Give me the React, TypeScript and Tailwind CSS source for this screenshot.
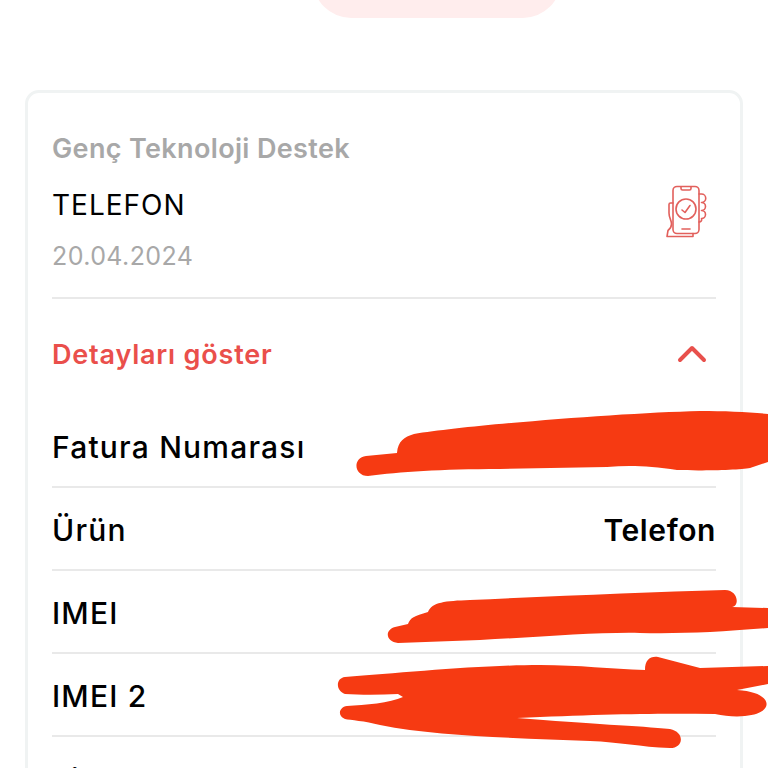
import React from 'react';

const rows = [
  { label: 'Fatura Numarası', value: '' },
  { label: 'Ürün', value: 'Telefon' },
  { label: 'IMEI', value: '' },
  { label: 'IMEI 2', value: '' },
  { label: 'Fiyat', value: '' },
];

const PhoneCheckIcon = () => (
  <svg width="42" height="56" viewBox="0 0 42 56" fill="none" stroke="#e2605c" strokeWidth="1.6" strokeLinecap="round" strokeLinejoin="round">
    <rect x="8" y="1.5" width="26" height="47" rx="4" />
    <path d="M16 2v1.5a1.5 1.5 0 0 0 1.5 1.5h7a1.5 1.5 0 0 0 1.5-1.5V2" />
    <path d="M17 44h8" />
    <circle cx="21" cy="24" r="10" />
    <path d="M17 25l3 2.500 5-7" />
    <path d="M34 9h2.500a2.500 2.500 0 0 1 0 8.500a2.500 2.500 0 0 1 0 8a2.500 2.500 0 0 1 0 8a2.500 2.500 0 0 1-2.500 3.500" />
    <path d="M8 18H5.500a1.500 1.500 0 0 0-1.500 1.500V28c0 5 2.500 7 2.500 11 0 3-1.500 5-3.500 6.500L2 51.500h26v-3" />
  </svg>
);

// marker scribbles hiding the private numbers
const Scribbles = () => (
  <svg className="absolute left-0 top-0" width="768" height="768" viewBox="0 0 768 768" fill="#f63a12">
    <path d="M366 456 L397 453 C398 441 404 437 414 434 C470 425 620 413 700 411 C725 411 750 412 768 414 L768 462 L750 468 C740 470 700 471 677 470 C650 466 630 465 607 467 L500 469 C440 469 400 472 368 476 C354 476 352 458 366 456 Z" />
    <path d="M395 627 L408 624 C410 618 414 616 428 612 C432 602 445 601 470 600 C560 596 650 592 725 590 C738 590 740 606 732 607 L768 608 L768 628 C720 632 680 634 640 633 C600 632 540 637 480 640 L398 643 C386 642 384 630 395 627 Z" />
    <path d="M345 677 C400 673 480 665 540 665 C580 665 610 669 645 670 C645 660 650 656 658 657 L700 668 L768 666 L768 684 L737 690 C775 692 775 714 745 716 C735 717 725 716 715 714 C660 713 600 714 517 718 C590 724 640 726 670 729 C685 732 684 748 670 748 C640 747 620 742 590 741 C520 738 440 737 380 725 C365 721 350 720 345 719 C337 716 339 707 347 706 C365 705 390 703 403 697 L398 694 C380 695 360 695 345 694 C335 690 336 678 345 677 Z" />
  </svg>
);

export default function App() {
  return (
    <div className="relative h-[768px] w-[768px] overflow-hidden bg-white font-['Inter',sans-serif]">
      <div className="mx-auto -mt-[60px] h-[78px] w-[248px] translate-x-[53px] rounded-[38px] bg-[#ffeded]" />

      <div className="mx-[25px] mt-[72px] rounded-[14px] border-[3px] border-[#f0f3f3] px-[24px] pt-[40px]">
        <div className="flex items-center justify-between border-b-2 border-[#e9e9e9] pb-[25px]">
          <div>
            <div className="text-[27px] font-semibold leading-[32px] tracking-[0.35px] text-[#a8a8a8]">Genç Teknoloji Destek</div>
            <div className="mt-[23px] text-[28px] font-normal leading-[34px] tracking-[1px] text-black">TELEFON</div>
            <div className="mt-[18px] text-[25px] leading-[32px] tracking-[0.4px] text-[#a8a8a8]">20.04.2024</div>
          </div>
          <div className="mr-[9px] mt-[20px]">
            <PhoneCheckIcon />
          </div>
        </div>

        <div className="flex h-[106px] items-center justify-between pt-[6px]">
          <span className="text-[27px] font-semibold tracking-[0.8px] text-[#ea4f4b]">Detayları göster</span>
          <svg className="mr-[9px] -mt-[5px]" width="30" height="20" viewBox="0 0 30 20" fill="none" stroke="#e8504c" strokeWidth="4" strokeLinecap="round" strokeLinejoin="round">
            <path d="M3 17L15 5l12 12" />
          </svg>
        </div>

        {rows.map((row) => (
          <div key={row.label} className="flex h-[83px] items-center justify-between border-b-2 border-[#e9e9e9] pt-[3px] text-[30px] font-medium tracking-[1.2px] text-black last:pt-[4px]">
            <span>{row.label}</span>
            {row.value && <span className="font-semibold tracking-[0.6px]">{row.value}</span>}
          </div>
        ))}
      </div>

      <Scribbles />
    </div>
  );
}
